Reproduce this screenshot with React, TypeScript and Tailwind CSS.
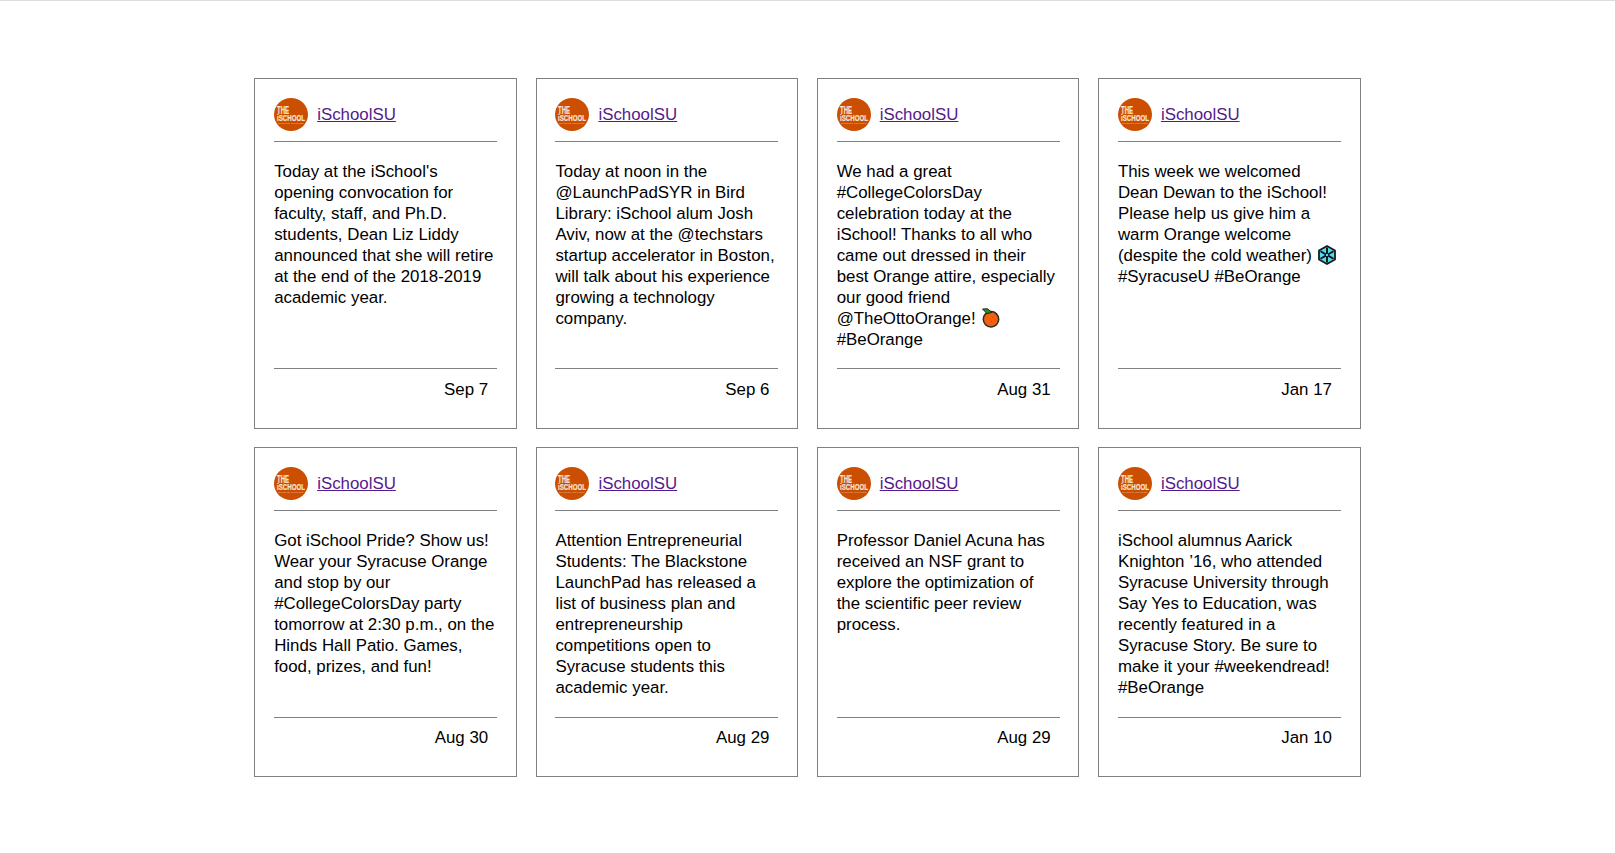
const Logo = () => (
  <svg width="34" height="33" viewBox="0 0 34 34" preserveAspectRatio="none" className="shrink-0 self-end">
    <circle cx="17" cy="17" r="17" fill="#cc4e00" />
    <text x="3" y="16" fontSize="11" fontFamily="Liberation Sans, sans-serif" fontWeight="700" fill="#f6e4d6" stroke="#f6e4d6" strokeWidth=".25" textLength="12" lengthAdjust="spacingAndGlyphs">THE</text>
    <text x="3" y="23.7" fontSize="10" fontFamily="Liberation Sans, sans-serif" fontWeight="700" fill="#f6e4d6" stroke="#f6e4d6" strokeWidth=".25" textLength="28" lengthAdjust="spacingAndGlyphs">iSCHOOL</text>
    <text x="4" y="27" fontSize="2.6" fontFamily="Liberation Sans, sans-serif" fill="#eebb99" textLength="26" lengthAdjust="spacingAndGlyphs">Syracuse University</text>
  </svg>
);

const OrangeIcon = () => (
  <svg width="19" height="20" viewBox="0 0 19 20" className="inline-block align-[-4px] ml-[1px]">
    <circle cx="10" cy="11.3" r="7.7" fill="#f4600c" stroke="#2a2a2a" strokeWidth="1.5" />
    <path d="M1.5 1 L6.5 .8 L11 4.5 L6 5.5 Z" fill="#1f9a1f" stroke="#222" strokeWidth="1" strokeLinejoin="round" />
    <circle cx="11.5" cy="9.5" r=".7" fill="#c94a05" />
    <circle cx="14" cy="12" r=".7" fill="#c94a05" />
    <circle cx="10.5" cy="13.5" r=".7" fill="#c94a05" />
  </svg>
);

const SnowIcon = () => (
  <svg width="18" height="20" viewBox="0 0 18 20" className="inline-block align-[-4px] ml-[1px]">
    <path d="M9 1 L17 5.5 L17 14.5 L9 19 L1 14.5 L1 5.5 Z" fill="#4ddcf2" stroke="#1a1a1a" strokeWidth="1.8" strokeLinejoin="round" />
    <path d="M9 2.5 V17.5 M2.5 6.2 L15.5 13.8 M15.5 6.2 L2.5 13.8" stroke="#111" strokeWidth="1.9" />
    <circle cx="9" cy="10" r="1.8" fill="#4ddcf2" stroke="#111" strokeWidth="1" />
  </svg>
);

type Tweet = { lines: React.ReactNode; date: string };

const tweets: Tweet[] = [
  { lines: "Today at the iSchool's opening convocation for faculty, staff, and Ph.D. students, Dean Liz Liddy announced that she will retire at the end of the 2018-2019 academic year.", date: "Sep 7" },
  { lines: "Today at noon in the @LaunchPadSYR in Bird Library: iSchool alum Josh Aviv, now at the @techstars startup accelerator in Boston, will talk about his experience growing a technology company.", date: "Sep 6" },
  { lines: <>We had a great #CollegeColorsDay celebration today at the iSchool! Thanks to all who came out dressed in their best Orange attire, especially our good friend @TheOttoOrange! <OrangeIcon /> #BeOrange</>, date: "Aug 31" },
  { lines: <>This week we welcomed Dean Dewan to the iSchool! Please help us give him a warm Orange welcome (despite the cold weather) <SnowIcon /> #SyracuseU #BeOrange</>, date: "Jan 17" },
  { lines: "Got iSchool Pride? Show us! Wear your Syracuse Orange and stop by our #CollegeColorsDay party tomorrow at 2:30 p.m., on the Hinds Hall Patio. Games, food, prizes, and fun!", date: "Aug 30" },
  { lines: "Attention Entrepreneurial Students: The Blackstone LaunchPad has released a list of business plan and entrepreneurship competitions open to Syracuse students this academic year.", date: "Aug 29" },
  { lines: "Professor Daniel Acuna has received an NSF grant to explore the optimization of the scientific peer review process.", date: "Aug 29" },
  { lines: "iSchool alumnus Aarick Knighton ’16, who attended Syracuse University through Say Yes to Education, was recently featured in a Syracuse Story. Be sure to make it your #weekendread! #BeOrange", date: "Jan 10" },
];

const Card = ({ t, lower }: { t: Tweet; lower: boolean }) => (
  <div className="flex flex-col border border-[#808080] pl-[18.9px] pr-[18.6px] pt-[18px] pb-[28px] bg-white">
    <div className="flex items-center gap-[9px] h-[34px]">
      <Logo />
      <a href="#" className="text-[#551a8b] underline">iSchoolSU</a>
    </div>
    <hr className="border-0 border-t border-[#808080] mt-[10px]" />
    <p className="mt-[19px] flex-1">{t.lines}</p>
    <hr className={lower ? "border-0 border-t border-[#808080] mt-[19px]" : "border-0 border-t border-[#808080] mt-[18px]"} />
    <div className={lower ? "text-right pr-[9px] mt-[9px]" : "text-right pr-[9px] mt-[10px]"}>{t.date}</div>
  </div>
);

export default function App() {
  return (
    <div className="min-h-[853px] bg-white border-t border-[#dddddd] font-['Liberation_Sans',Arial,sans-serif] text-[16.88px] leading-[21px] text-black">
      <div className="ml-[254.25px] pt-[77px] w-[1106.25px] grid grid-cols-4 gap-x-[18.75px] gap-y-[18px]">
        {tweets.map((t, i) => <Card key={i} t={t} lower={i >= 4} />)}
      </div>
    </div>
  );
}
